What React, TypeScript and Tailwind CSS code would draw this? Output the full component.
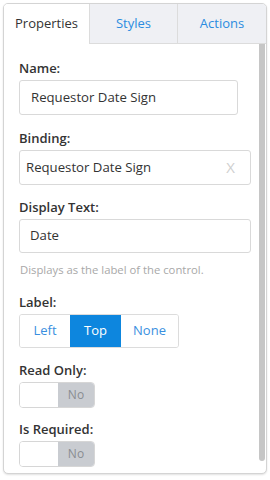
import React from "react";

const font = { fontFamily: '"Open Sans", "Noto Sans", sans-serif' };

function Label({ children }: { children: React.ReactNode }) {
  return (
    <div className="text-[13px] leading-[18px] font-semibold text-[#333] mb-[3px]">
      {children}
    </div>
  );
}

function Toggle() {
  return (
    <div className="flex w-[76px] h-[26px] rounded-[4px] border border-[#d6d6d6] overflow-hidden">
      <div className="w-[38px] bg-white" />
      <div className="flex-1 bg-[#c9ccd1] flex items-center justify-center text-[12px] text-[#8a8d92]">
        No
      </div>
    </div>
  );
}

export default function App() {
  return (
    <div className="w-[270px] h-[480px] bg-white" style={font}>
      <div className="ml-[3px] mt-[3px] w-[264px] h-[471px] border border-[#d4d4d4] rounded-[5px] shadow-[0_1px_2px_rgba(0,0,0,0.12)] flex flex-col overflow-hidden bg-white">
        <div className="flex h-[40px] shrink-0">
          <div className="w-[86px] flex items-center justify-center text-[13px] text-[#333] bg-white border-r border-[#dcdcdc]">
            Properties
          </div>
          <div className="w-[88px] flex items-center justify-center text-[13px] text-[#2b8ce0] bg-[#eff0f4] border-b border-r border-[#dcdcdc]">
            Styles
          </div>
          <div className="flex-1 flex items-center justify-center text-[13px] text-[#2b8ce0] bg-[#eff0f4] border-b border-[#dcdcdc]">
            Actions
          </div>
        </div>
        <div className="flex flex-1">
          <div className="flex-1 pl-[15px] pt-[15px] pr-[6px]">
            <Label>Name:</Label>
            <div className="w-[219px] h-[35px] border border-[#d9d9d9] rounded-[3px] flex items-center pl-[11px] text-[13.2px] text-[#333] mt-[2px]">
              Requestor Date Sign
            </div>
            <div className="mt-[14px]">
              <Label>Binding:</Label>
              <div className="w-[232px] h-[35px] border border-[#d9d9d9] rounded-[3px] flex items-center pl-[6px] pr-[15px] text-[13.2px] text-[#333]">
                <span className="flex-1">Requestor Date Sign</span>
                <span className="text-[15px] text-[#cfcfcf]">X</span>
              </div>
            </div>
            <div className="mt-[13px]">
              <Label>Display Text:</Label>
              <div className="w-[232px] h-[34px] border border-[#d9d9d9] rounded-[3px] flex items-center pl-[10px] text-[13.2px] text-[#333]">
                Date
              </div>
              <div className="text-[11.3px] leading-[16px] text-[#a8a8a8] mt-[9px] pl-[1px]">
                Displays as the label of the control.
              </div>
            </div>
            <div className="mt-[15px]">
              <Label>Label:</Label>
              <div className="flex w-[160px] h-[34px] border border-[#dcdcdc] rounded-[3px] overflow-hidden text-[13px]">
                <div className="w-[50px] flex items-center justify-center text-[#3a8fe0] bg-white">Left</div>
                <div className="w-[51px] flex items-center justify-center text-white bg-[#0d86de]">Top</div>
                <div className="flex-1 flex items-center justify-center text-[#3a8fe0] bg-white">None</div>
              </div>
            </div>
            <div className="mt-[13px]">
              <Label>Read Only:</Label>
              <Toggle />
            </div>
            <div className="mt-[12px]">
              <Label>Is Required:</Label>
              <Toggle />
            </div>
          </div>
          <div className="w-[6px] mr-[1px] h-[417px] bg-[#c6c6c6] rounded-b-[3px]" />
        </div>
      </div>
    </div>
  );
}
